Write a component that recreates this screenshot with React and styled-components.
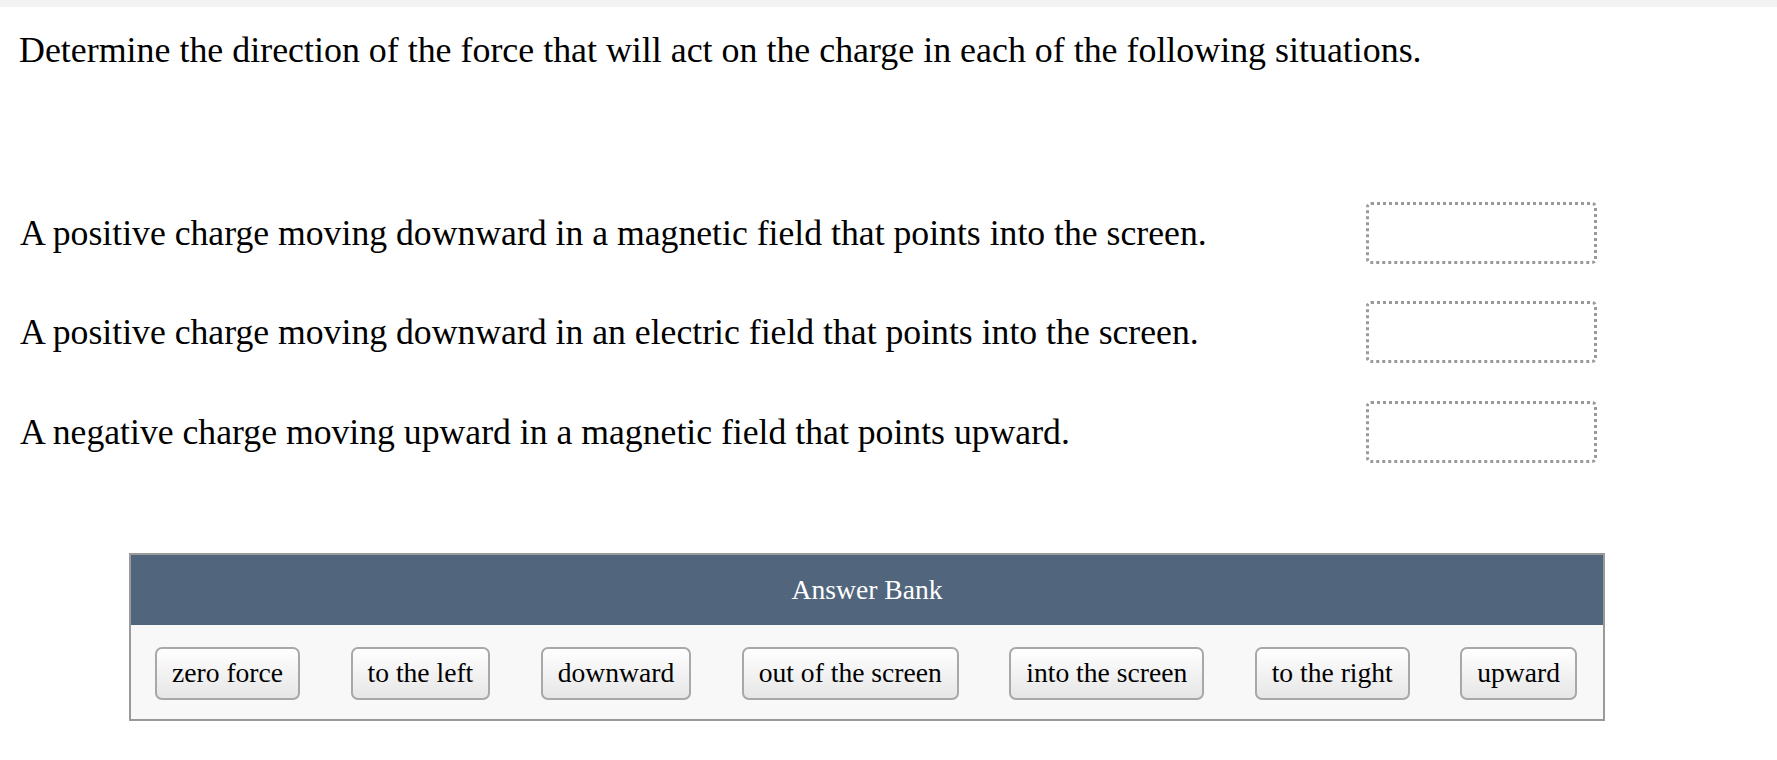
import React from "react";
import styled, { createGlobalStyle } from "styled-components";

const Global = createGlobalStyle`
  html, body { margin: 0; padding: 0; background: #ffffff; }
  body { font-family: "Liberation Serif", "Times New Roman", serif; color: #000; }
`;

const Page = styled.div`
  width: 1777px;
  min-height: 760px;
  background: #fff;
`;

const TopStrip = styled.div`
  height: 7px;
  background: #f2f2f2;
`;

const Heading = styled.p`
  margin: 0;
  padding: 22px 0 0 19px;
  font-size: 35.9px;
  line-height: 42px;
`;

const Statements = styled.div`
  margin-top: 112px;
  display: flex;
  flex-direction: column;
`;

const Row = styled.div`
  width: 1597px;
  height: 99.5px;
  box-sizing: border-box;
  padding-left: 20px;
  display: flex;
  align-items: center;
`;

const Statement = styled.span`
  font-size: 35.7px;
  line-height: 42px;
`;

const DropBox = styled.div`
  margin-left: auto;
  width: 231px;
  height: 62px;
  box-sizing: border-box;
  border: 3px dotted #9a9a9a;
  border-radius: 5px;
`;

const Bank = styled.section`
  margin: 71px 0 0 129px;
  width: 1476px;
  box-sizing: border-box;
  border: 2px solid #9a9a9a;
  background: #f8f8f8;
`;

const BankHeader = styled.div`
  height: 70px;
  background: #51657c;
  color: #ffffff;
  font-size: 27.6px;
  display: flex;
  align-items: center;
  justify-content: center;
`;

const Choices = styled.div`
  display: flex;
  justify-content: space-between;
  padding: 22px 26px 19px 24px;
`;

const Choice = styled.button`
  height: 53px;
  padding: 0 15px;
  font-family: "Liberation Serif", "Times New Roman", serif;
  font-size: 27.6px;
  color: #000;
  border: 2px solid #a8a8a8;
  border-radius: 7px;
  background: linear-gradient(#ffffff, #e6e6e6);
  cursor: pointer;
`;

const situations = [
  "A positive charge moving downward in a magnetic field that points into the screen.",
  "A positive charge moving downward in an electric field that points into the screen.",
  "A negative charge moving upward in a magnetic field that points upward.",
];

const answers = [
  "zero force",
  "to the left",
  "downward",
  "out of the screen",
  "into the screen",
  "to the right",
  "upward",
];

export default function App() {
  return (
    <Page>
      <Global />
      <TopStrip />
      <Heading>
        Determine the direction of the force that will act on the charge in each of the following situations.
      </Heading>
      <Statements>
        {situations.map((s) => (
          <Row key={s}>
            <Statement>{s}</Statement>
            <DropBox />
          </Row>
        ))}
      </Statements>
      <Bank>
        <BankHeader>Answer Bank</BankHeader>
        <Choices>
          {answers.map((a) => (
            <Choice key={a}>{a}</Choice>
          ))}
        </Choices>
      </Bank>
    </Page>
  );
}
